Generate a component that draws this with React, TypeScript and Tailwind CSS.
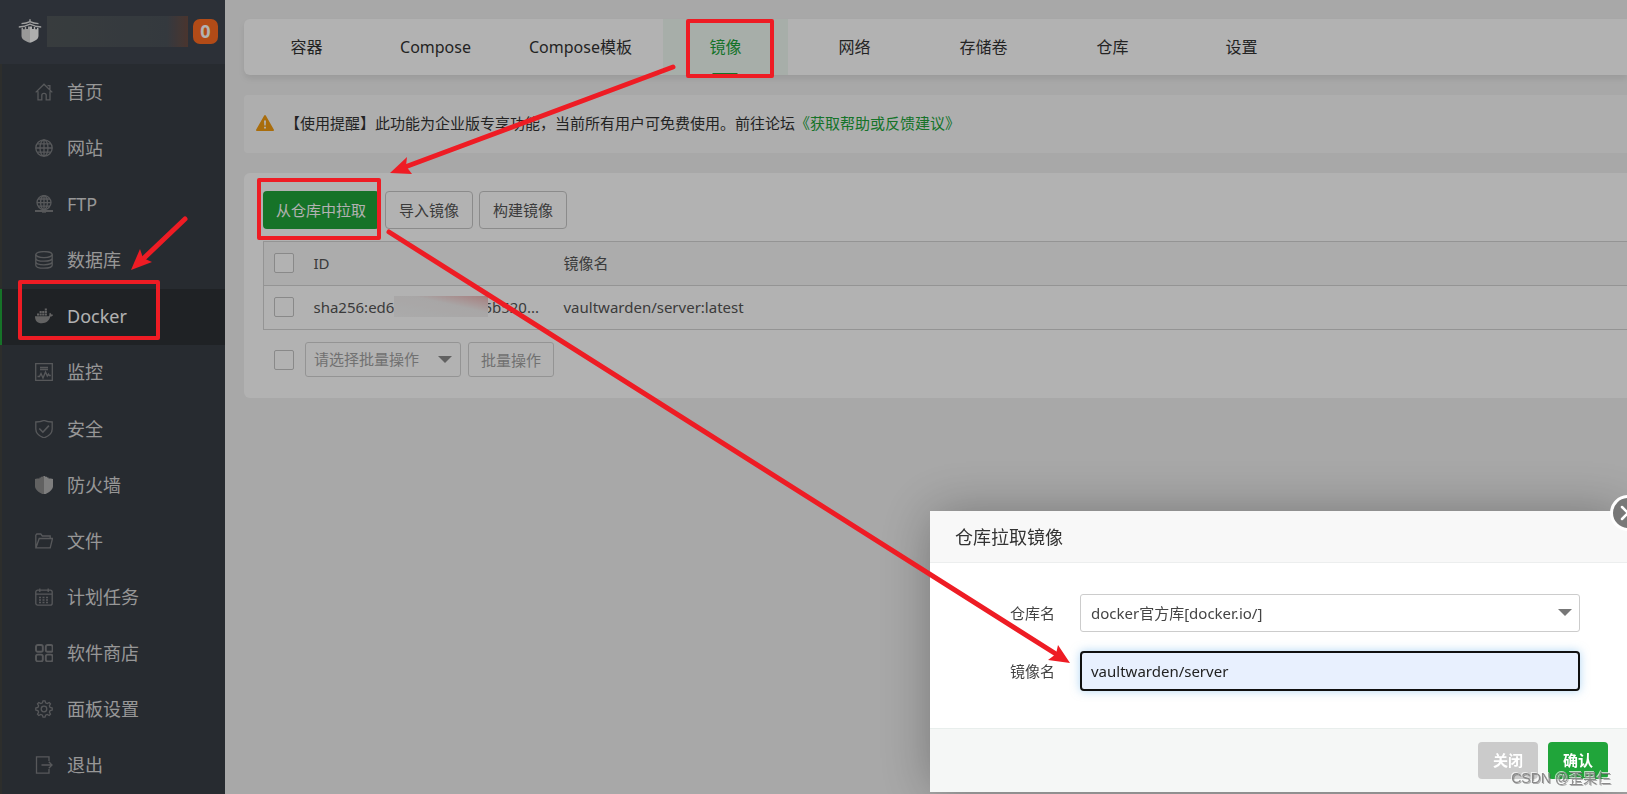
import React, { useState } from 'react';
import { clsx } from 'clsx';

type IconProps = { className?: string };

const Icon: React.FC<IconProps & { children: React.ReactNode }> = ({ className, children }) => (
  <svg
    className={clsx('h-[18px] w-[18px] shrink-0', className)}
    viewBox="0 0 18 18"
    fill="none"
    stroke="currentColor"
    strokeWidth="1.3"
    aria-hidden="true"
  >
    {children}
  </svg>
);

const HomeIcon = () => (
  <Icon>
    <path d="M0.7 9.4 9 1.2l8.3 8.2M12.5 2.6h2.4v4M3 8.2v8.6h3.8v-4.4c0-1.3 1-2 2.2-2s2.2.7 2.2 2v4.4H15V8.2" />
  </Icon>
);

const GlobeIcon = () => (
  <Icon>
    <circle cx="9" cy="9" r="8.2" />
    <ellipse cx="9" cy="9" rx="4" ry="8.2" />
    <path d="M9 .8v16.4M.8 9h16.4M2.2 4.8h13.6M2.2 13.2h13.6" />
  </Icon>
);

const FtpIcon = () => (
  <Icon>
    <circle cx="9" cy="7.6" r="7" />
    <ellipse cx="9" cy="7.6" rx="3.4" ry="7" />
    <path d="M9 .6v14M2 7.6h14M3 4h12M3 11.2h12" />
    <path d="M-.5 16h19" strokeWidth="2" />
    <path d="M7 16h4" strokeWidth="3.4" />
  </Icon>
);

const DatabaseIcon = () => (
  <Icon>
    <ellipse cx="9" cy="3.6" rx="8.2" ry="3" />
    <path d="M.8 3.6v10.6c0 1.7 3.6 3 8.2 3s8.2-1.3 8.2-3V3.6M.8 7.2c0 1.7 3.6 3 8.2 3s8.2-1.3 8.2-3M.8 10.8c0 1.7 3.6 3 8.2 3s8.2-1.3 8.2-3" />
  </Icon>
);

const DockerIcon = () => (
  <Icon className="text-[#8f8f8f]">
    <g fill="currentColor" stroke="none">
      <path d="M0 9.2h13.8c.6-.4.8-1.2.5-2.5l.7-1c.9.5 1.3 1.2 1.4 1.9.7-.1 1.3 0 1.6.3-.4 1.200-1.400 1.700-2.600 1.700C14 14 11.400 16.200 6.800 16.200 2.300 16.200 0 13.600 0 9.200z" />
      <path d="M2 6.600h2.100v2H2zM4.600 6.600h2.100v2H4.600zM7.200 6.600h2.100v2H7.200zM9.800 6.600h2.100v2H9.800zM4.600 4.100h2.100v2H4.600zM7.200 4.100h2.100v2H7.200zM9.800 4.100h2.100v2H9.800zM9.800 1.600h2.100v2H9.800z" />
    </g>
  </Icon>
);

const MonitorIcon = () => (
  <Icon>
    <path d="M.7.7h16.600v16.600H.7zM5 4.500h8M5 6.500h8M2.500 13.500h2l1.500-3 2 4.500 2.500-6 1.800 4 1.200-2 .8 1.500h1.500" />
  </Icon>
);

const SafeIcon = () => (
  <Icon>
    <path d="M9 .3C6.500 1.500 3.800 2 .8 2v7c0 4.200 3.200 7 8.200 8.900 5-1.900 8.200-4.700 8.200-8.900V2C14.200 2 11.500 1.500 9 .3z" />
    <path d="m4.300 8.500 3.600 3.700 6-6.600" strokeWidth="1.600" />
  </Icon>
);

const FirewallIcon = () => (
  <Icon>
    <path d="M9-.8 7.500.8H6v.8H4.500v.8H2.200L0 3v7.500C.4 14.200 4.600 16.800 9 18.800z" fill="#8b8b8b" stroke="none" />
    <path d="M9-.8 10.500.8H12v.8h1.500v.8h2.300L18 3v7.500c-.4 3.700-4.600 6.300-9 8.300z" fill="#b5b5b5" stroke="none" />
  </Icon>
);

const FolderIcon = () => (
  <Icon>
    <path d="M.8 15.800V3.200L1.800 2h4l1.500 2h7.900v2.500M1 15.800h14.200l2.300-9.300H4.200L1 15.800z" />
  </Icon>
);

const CalendarIcon = () => (
  <Icon>
    <rect x=".8" y="2.200" width="16.400" height="15" rx="2" />
    <path d="M.8 6.200h16.400M4.800.4v3.600M13.200.4v3.600" />
    <path d="M4 9.500h10M4 12h10M4 14.500h10" strokeDasharray="2 1.500" />
  </Icon>
);

const AppsIcon = () => (
  <Icon>
    <g strokeWidth="1.900">
      <rect x="1" y="1" width="6.800" height="6.800" rx="1.800" />
      <rect x="10.800" y="1" width="6.800" height="6.800" rx="1.800" />
      <rect x="1" y="10.600" width="6.800" height="6.800" rx="1.800" />
      <rect x="10.800" y="10.600" width="6.800" height="6.800" rx="1.800" />
    </g>
  </Icon>
);

const GearIcon = () => (
  <Icon>
    <path d="M7.400 2.900 8 .8h2l.6 2.100 1.600.7 2-1.100 1.300 1.300-1.100 2 .7 1.600 2.100.6v2l-2.100.6-.7 1.600 1.100 2-1.300 1.300-2-1.100-1.600.7-.6 2.100H8l-.6-2.100-1.600-.7-2 1.100-1.300-1.300 1.100-2-.7-1.600L.8 10V8l2.100-.6.7-1.600-1.100-2 1.300-1.300 2 1.100z" />
    <circle cx="9" cy="9" r="2.800" />
  </Icon>
);

const ExitIcon = () => (
  <Icon>
    <path d="M14 5V.8H1.500v16.400H14V13M6.500 9h10.800M13.800 5.800 17 9l-3.200 3.200" />
  </Icon>
);

const Logo = () => (
  <svg className="h-6 w-6 shrink-0" viewBox="0 0 24 24" aria-hidden="true">
    <g fill="none" stroke="#e6e6e6" strokeWidth="1.400">
      <path d="M12 .2v3M3.500 4.600C7.500 4.400 10 3.600 12 2.600c2 1 4.500 1.800 8.500 2M.8 8c5-.2 8.500-1.400 11.200-2.800C14.700 6.600 18.200 7.800 23.200 8" />
    </g>
    <path d="M3.500 9.200 5 8.400v1.800h1.800V8h1.400v2H10V7.600h2v16.200c-4.800-1.400-8.500-3.400-8.500-7z" fill="#dcdcdc" />
    <path d="M20.500 9.200 19 8.400v1.800h-1.800V8h-1.400v2H14V7.600h-2v16.200c4.800-1.400 8.500-3.400 8.500-7z" fill="#fafafa" />
  </svg>
);

const WarnIcon = () => (
  <svg className="h-4 w-[18px] shrink-0" viewBox="0 0 18 16" aria-hidden="true">
    <path d="M8.200.6a1 1 0 0 1 1.600 0l8 13.900a1 1 0 0 1-.8 1.500H1a1 1 0 0 1-.8-1.500z" fill="#f39c12" />
    <path d="M8 5.500h2l-.3 5H8.300zM8.100 11.800h1.800v1.800H8.100z" fill="#fff" />
  </svg>
);

const Caret: React.FC<IconProps> = ({ className }) => (
  <svg className={clsx('pointer-events-none absolute h-[7px] w-[14px]', className)} viewBox="0 0 14 7" aria-hidden="true">
    <path d="M0 0h14L7 7z" fill="currentColor" />
  </svg>
);

const MENU = [
  { name: '首页', icon: HomeIcon },
  { name: '网站', icon: GlobeIcon },
  { name: 'FTP', icon: FtpIcon },
  { name: '数据库', icon: DatabaseIcon },
  { name: 'Docker', icon: DockerIcon },
  { name: '监控', icon: MonitorIcon },
  { name: '安全', icon: SafeIcon },
  { name: '防火墙', icon: FirewallIcon },
  { name: '文件', icon: FolderIcon },
  { name: '计划任务', icon: CalendarIcon },
  { name: '软件商店', icon: AppsIcon },
  { name: '面板设置', icon: GearIcon },
  { name: '退出', icon: ExitIcon },
];

const TABS = ['容器', 'Compose', 'Compose模板', '镜像', '网络', '存储卷', '仓库', '设置'];

const Sidebar: React.FC = () => (
  <aside className="flex w-[225px] shrink-0 flex-col bg-[#383e46]">
    <div className="flex h-16 items-center bg-[#3f454f] pr-[7px] pb-0.5 pl-[18px]">
      <Logo />
      <div className="ml-[5px] h-[31px] flex-1 bg-linear-to-r from-[#51575a] from-0% via-[#4b525a] via-85% to-[#6a4c43]" />
      <span className="ml-[5px] flex h-[25px] w-[25px] items-center justify-center rounded-[7px] bg-[#ff6c22] text-lg leading-none font-bold text-white">
        0
      </span>
    </div>
    <nav className="flex flex-1 flex-col">
      {MENU.map(({ name, icon: MenuIcon }) => {
        const active = name === 'Docker';
        return (
          <a
            key={name}
            href="#"
            className={clsx(
              'flex flex-1 items-center gap-3.5 border-l-2 pb-px pl-[33px] text-lg leading-6',
              active ? 'border-[#20a53a] bg-[#2d3136] text-white' : 'border-[#41423f] text-[#d8d8d8]',
            )}
          >
            <span className="text-[#7d7f82]"><MenuIcon /></span>
            {name}
          </a>
        );
      })}
    </nav>
  </aside>
);

const Checkbox: React.FC<{ label: string }> = ({ label }) => (
  <input
    type="checkbox"
    aria-label={label}
    className="block h-5 w-5 shrink-0 appearance-none rounded-[2px] border border-[#c4c4c4] bg-white checked:bg-[#20a53a]"
  />
);

const ImagePanel: React.FC = () => (
  <section className="rounded-l-md bg-white pt-[18px] pb-[21px] pl-[19px] text-[15px] leading-5 text-[#555]">
    <div className="flex gap-1.5">
      <button className="h-[38px] rounded-[4px] bg-[#20a53a] px-[13px] text-white">从仓库中拉取</button>
      <button className="h-[38px] rounded-[4px] border border-[#c8c8c8] px-[13px]">导入镜像</button>
      <button className="h-[38px] rounded-[4px] border border-[#c8c8c8] px-[13px]">构建镜像</button>
    </div>

    <table className="mt-3 w-full table-fixed border-collapse border border-r-0 border-[#d5d5d5] text-left">
      <thead>
        <tr className="h-11 border-b border-[#d5d5d5] bg-[#f6f6f6]">
          <th className="w-[50px] pb-0.5 pl-2.5"><Checkbox label="全选" /></th>
          <th className="w-[250px] pb-0.5 font-normal">ID</th>
          <th className="pb-0.5 font-normal">镜像名</th>
        </tr>
      </thead>
      <tbody>
        <tr className="h-11">
          <td className="pb-0.5 pl-2.5"><Checkbox label="vaultwarden/server:latest" /></td>
          <td className="pb-0.5">
            <div className="flex items-center whitespace-nowrap">
              <span>sha256:ed6</span>
              {/* masked part of the hash, covers the edge of the next digit */}
              <span className="relative -mr-[5px] h-[21px] w-[94px] bg-linear-to-tr from-[#f5f5f5] via-[#f1eeee] via-60% to-[#eeb4b4]" />
              <span>5b520...</span>
            </div>
          </td>
          <td className="pb-0.5">vaultwarden/server:latest</td>
        </tr>
      </tbody>
    </table>

    <div className="mt-3 flex items-center pl-[11px] text-[#a3a3a3]">
      <Checkbox label="选择全部镜像" />
      <div className="relative ml-[11px]">
        <select
          aria-label="批量操作"
          className="block h-[35px] w-[156px] appearance-none rounded-[3px] border border-[#d5d5d5] bg-white pb-0.5 pl-2"
        >
          <option>请选择批量操作</option>
          <option>删除镜像</option>
        </select>
        <Caret className="top-3.5 right-[9px] text-[#8c8c8c]" />
      </div>
      <button className="ml-[7px] h-[35px] rounded-[3px] border border-[#d5d5d5] px-3">批量操作</button>
    </div>
  </section>
);

const PullDialog: React.FC = () => {
  const [image, setImage] = useState('vaultwarden/server');

  return (
    <div
      role="dialog"
      aria-labelledby="pull-title"
      className="relative w-[697px] bg-white text-[15px] text-[#444] shadow-[1px_1px_50px_rgba(0,0,0,0.3)]"
    >
      <h2 id="pull-title" className="flex h-[52px] items-center border-b border-[#eceeee] bg-[#f8f8f8] pl-[25px] text-lg text-[#333]">
        仓库拉取镜像
      </h2>
      <button
        aria-label="关闭弹窗"
        className="absolute -top-4 -right-[19px] flex h-9 w-9 items-center justify-center rounded-full border-[3px] border-white bg-[#787878]"
      >
        <svg className="h-4 w-4" viewBox="0 0 16 16" stroke="#fff" strokeWidth="2.500" strokeLinecap="round" aria-hidden="true">
          <path d="m2 2 12 12M14 2 2 14" />
        </svg>
      </button>

      <div className="flex flex-col gap-[19px] pt-[31px] pr-[47px] pb-[37px]">
        <div className="flex items-center">
          <label htmlFor="registry" className="w-[125px] text-right">仓库名</label>
          <div className="relative ml-[25px] flex-1">
            <select
              id="registry"
              className="block h-[38px] w-full appearance-none rounded-[3px] border border-[#ccc] bg-white pl-2.5"
            >
              <option>docker官方库[docker.io/]</option>
            </select>
            <Caret className="top-[15px] right-2 text-[#777]" />
          </div>
        </div>
        <div className="flex items-center">
          <label htmlFor="image" className="w-[125px] text-right">镜像名</label>
          <input
            id="image"
            value={image}
            onChange={e => setImage(e.target.value)}
            className="ml-[25px] h-10 min-w-0 flex-1 rounded-[4px] border-2 border-[#101010] bg-[#e8f0fe] px-[9px] text-[#222] shadow-[0_0_10px_rgba(102,175,233,0.5)] outline-none"
          />
        </div>
      </div>

      <div className="flex h-16 items-center justify-end gap-2.5 border-t border-[#e8eeec] bg-[#f5f7f6] pr-[19px]">
        <button className="h-[37px] w-[60px] rounded-[4px] bg-[#cbcbcb] pb-0.5 leading-5 font-bold text-white">关闭</button>
        <button className="h-[37px] w-[60px] rounded-[4px] bg-[#20a53a] pb-0.5 leading-5 font-bold text-white">确认</button>
      </div>
    </div>
  );
};

// Red guide marks drawn over the page: frames and arrows between the steps
const GuideMarks: React.FC = () => (
  <svg className="pointer-events-none fixed top-0 left-0 h-[794px] w-[1627px]" viewBox="0 0 1627 794" aria-hidden="true">
    <g fill="none" stroke="#ee1c24" strokeWidth="4" strokeLinejoin="round">
      <rect x="20" y="282" width="138" height="56" />
      <rect x="688" y="21" width="84" height="55" />
      <rect x="259" y="180" width="120" height="58" />
    </g>
    <g stroke="#ee1c24" strokeWidth="5" strokeLinecap="round">
      <path d="M185 219 143 259" />
      <path d="M673 67 405 167" />
      <path d="m389 232 667 422" />
    </g>
    <g fill="#ee1c24">
      <path d="m131 270 9-21 3 9 9 4z" />
      <path d="m390 173 17-16-1 9 6 8z" />
      <path d="m1070 663-12-18-2 9-8 6z" />
    </g>
  </svg>
);

const App: React.FC = () => {
  const [tab, setTab] = useState('镜像');

  return (
    <div className="flex min-h-screen overflow-hidden bg-[#f1f1f1] font-['Noto_Sans','Noto_Sans_CJK_SC',sans-serif]">
      <Sidebar />

      <main className="flex min-w-0 flex-1 flex-col gap-5 pt-[19px] pl-[19px]">
        <div className="flex h-14 gap-1 rounded-l-md bg-white text-base shadow-[0_4px_6px_rgba(0,0,0,0.08)]">
          {TABS.map(name => (
            <button
              key={name}
              onClick={() => setTab(name)}
              className={clsx(
                'relative min-w-[125px] shrink-0 px-[27px]',
                name === tab ? 'bg-[#f0f9f3] text-[#20a53a]' : 'text-[#333]',
              )}
            >
              {name}
              {name === tab && <span className="absolute bottom-0 left-1/2 h-0.5 w-[25px] -translate-x-1/2 bg-[#20a53a]" />}
            </button>
          ))}
        </div>

        <div className="flex h-[58px] items-center gap-[11px] rounded-l-[4px] bg-[#fafafa] pb-0.5 pl-3 text-[15px] text-[#333]">
          <WarnIcon />
          <p>
            【使用提醒】此功能为企业版专享功能，当前所有用户可免费使用。前往论坛
            <a href="#" className="text-[#20a53a]">《获取帮助或反馈建议》</a>
          </p>
        </div>

        <ImagePanel />
      </main>

      <div className="fixed inset-0 flex items-end justify-end overflow-hidden bg-black/30 pb-0.5">
        <PullDialog />
      </div>

      <GuideMarks />

      <span className="pointer-events-none fixed right-4 bottom-2 font-['Liberation_Sans','Noto_Sans_CJK_SC',sans-serif] text-sm leading-4 text-[#8a8a8a] [text-shadow:-1px_-1px_0_#ffffffb0,1px_1px_0_#55555570]">
        CSDN @歪果仨
      </span>
    </div>
  );
};

export default App;
